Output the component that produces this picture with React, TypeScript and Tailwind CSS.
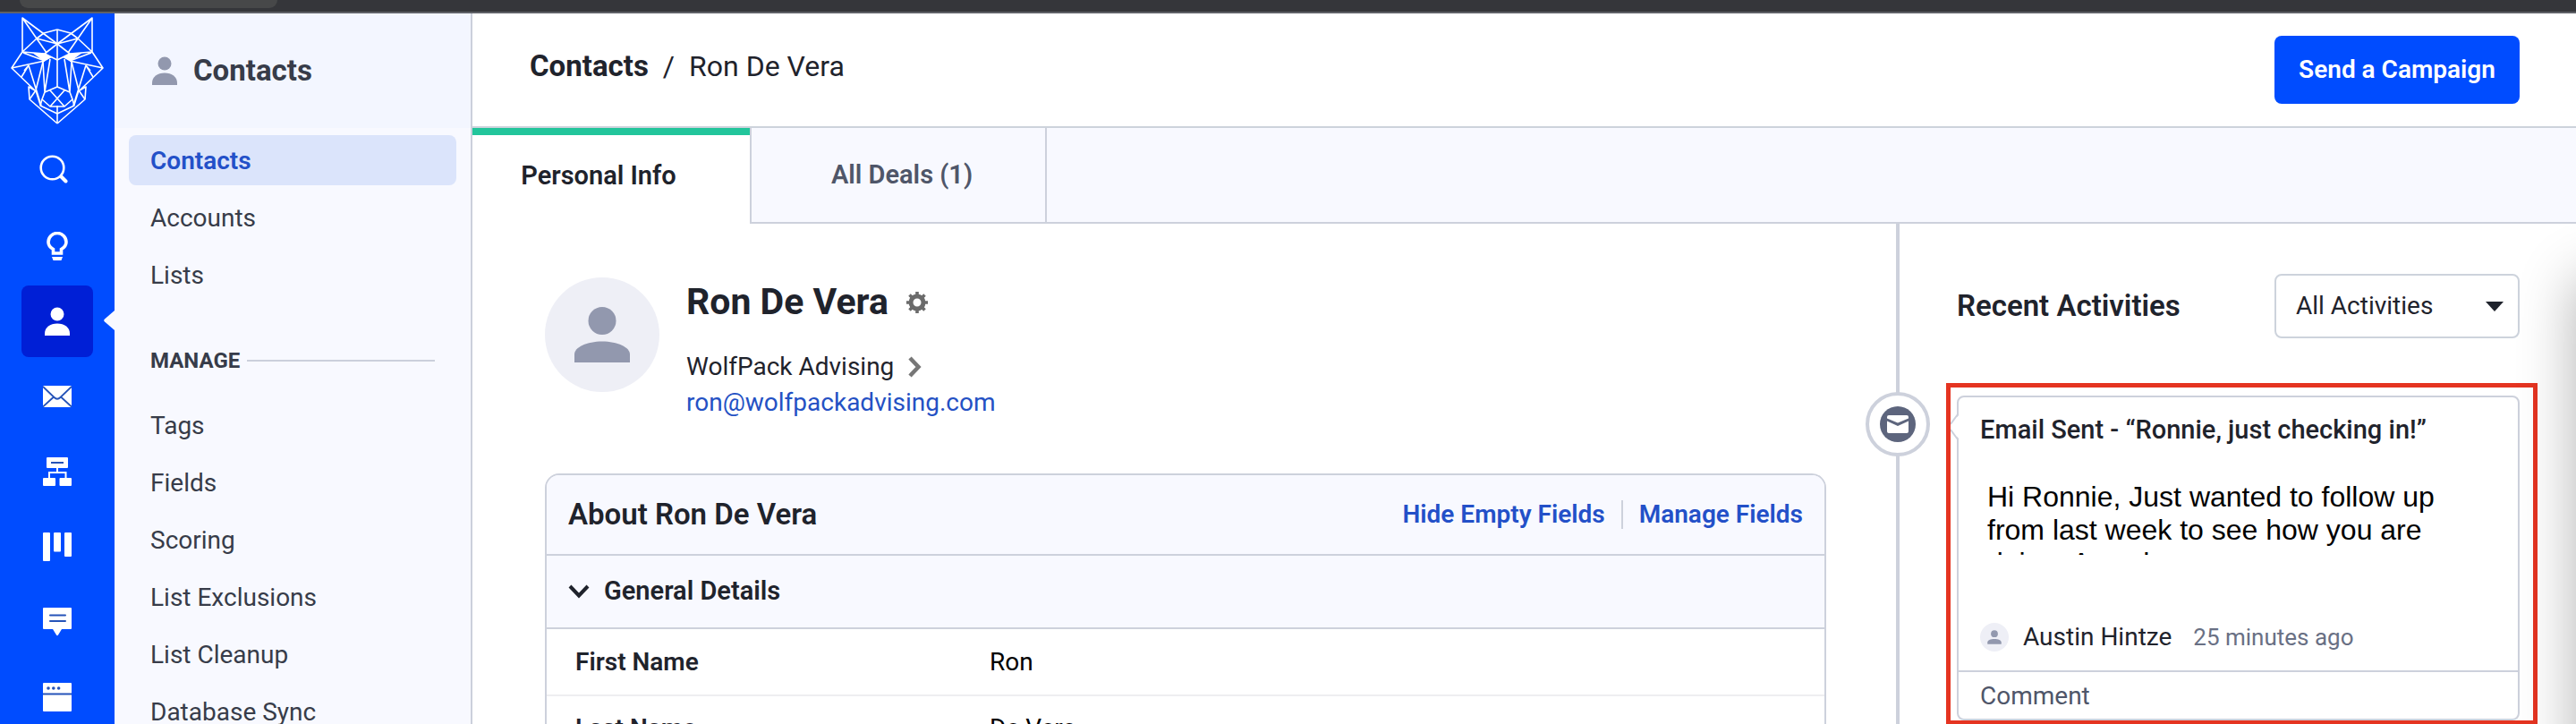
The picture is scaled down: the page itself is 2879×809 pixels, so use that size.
import React from 'react';

interface NavLink {
  label: string;
  active?: boolean;
}

interface ContactField {
  label: string;
  value: string;
}

const primaryLinks: NavLink[] = [
  { label: 'Contacts', active: true },
  { label: 'Accounts' },
  { label: 'Lists' },
];

const manageLinks: NavLink[] = [
  { label: 'Tags' },
  { label: 'Fields' },
  { label: 'Scoring' },
  { label: 'List Exclusions' },
  { label: 'List Cleanup' },
  { label: 'Database Sync' },
];

const contactFields: ContactField[] = [
  { label: 'First Name', value: 'Ron' },
  { label: 'Last Name', value: 'De Vera' },
];

// One half of the wolf head, mirrored around x = 64
const WolfHalf: React.FC = () => (
  <g>
    <path d="M25 58V20L64 49M25 20l27 39M25 58l16-15 8-6 15-4M41 43l23 6M64 49L50 60" />
    <path d="M25 58l25 2 14 7M25 58L13 76l37-8M13 76l26 25-7-4 1 14 31 27M26 59l24 9" />
    <path d="M32 73l-8 13M32 73l14 45M32 73l-5 6M40 101l-7 10M40 101L48 69M40 101l5 16" />
    <path d="M48 69l2 34M56 66l-6 37M50 103l14-6M50 103l-3 8 9 8h8M64 110l-8-9M64 110l-8 9" />
    <path d="M47 111l-2 7 19 9" />
    <path d="M36 59l14 1 8 4-9 5-6-5z" fill="currentColor" stroke="none" />
  </g>
);

const WolfLogo: React.FC = () => (
  <svg viewBox="0 15 128 136" className="h-[136px] w-32 shrink-0 text-white" fill="none" stroke="currentColor" strokeWidth="1.6" strokeLinejoin="round">
    <WolfHalf />
    <g transform="translate(128 0) scale(-1 1)">
      <WolfHalf />
    </g>
    <path d="M64 33v64M64 118v20" />
  </svg>
);

const PersonIcon: React.FC<{ className?: string }> = ({ className }) => (
  <svg viewBox="0 0 28 32" className={className} fill="currentColor">
    <circle cx="14" cy="8" r="7.5" />
    <path d="M0 32v-2.500C0 23 6 18.500 14 18.500S28 23 28 29.500V32z" />
  </svg>
);

const AvatarIcon: React.FC<{ className?: string }> = ({ className }) => (
  <svg viewBox="0 0 128 128" className={className}>
    <circle cx="64" cy="64" r="64" fill="#eeeff6" />
    <g fill="#9298ae">
      <circle cx="64" cy="48.500" r="15.500" />
      <path d="M33 95V86C33 78 47 71.500 64 71.500S95 78 95 86v9z" />
    </g>
  </svg>
);

const SearchIcon: React.FC = () => (
  <svg viewBox="0 0 32 32" className="mr-2 mb-1 h-8 w-8" fill="none" stroke="currentColor" strokeLinecap="round">
    <circle cx="14.500" cy="14.500" r="12.800" strokeWidth="2.600" />
    <path d="M24.500 24.500l5 5" strokeWidth="4" />
  </svg>
);

const BulbIcon: React.FC = () => (
  <svg viewBox="0 0 24 32" className="h-8 w-6" fill="none" stroke="currentColor" strokeWidth="3.600">
    <path d="M7.500 24v-4.500C4 17.500 2 15 2 11.500a10 10 0 0 1 20 0c0 3.500-2 6-5.500 8V24z" />
    <path d="M6 28h12l-1.500 4h-9z" fill="currentColor" stroke="none" />
  </svg>
);

const MailIcon: React.FC = () => (
  <svg viewBox="0 0 32 24" className="h-6 w-8">
    <rect width="32" height="24" rx="1" fill="currentColor" />
    <path d="M0 1l12.500 12c2.500 2.400 4.500 2.400 7 0L32 1M0 23.500l11.500-10.500M32 23.500L20.500 13" fill="none" stroke="#2553b8" strokeWidth="1.800" />
  </svg>
);

const AutomationIcon: React.FC = () => (
  <svg viewBox="0 0 32 32" className="h-8 w-8">
    <rect x="4" width="24" height="12" rx="1" fill="currentColor" />
    <rect y="23" width="14" height="9" rx="1" fill="currentColor" />
    <rect x="18.500" y="23" width="13.500" height="9" rx="1" fill="currentColor" />
    <path d="M16 12v5M7 24v-7h18.500v7" fill="none" stroke="currentColor" strokeWidth="2" />
    <path d="M9 6h14" stroke="#2553b8" strokeWidth="2" />
  </svg>
);

const PipelineIcon: React.FC = () => (
  <svg viewBox="0 0 32 32" className="h-8 w-8" fill="currentColor">
    <rect width="8" height="32" rx="1" />
    <rect x="12" width="8" height="21.500" rx="1" />
    <rect x="24" width="8" height="27" rx="1" />
  </svg>
);

const ChatIcon: React.FC = () => (
  <svg viewBox="0 0 32 32" className="h-8 w-8">
    <path d="M1 0h30a1 1 0 0 1 1 1v22a1 1 0 0 1-1 1H21l-4 6.500a1.200 1.200 0 0 1-2 0L11 24H1a1 1 0 0 1-1-1V1a1 1 0 0 1 1-1z" fill="currentColor" />
    <path d="M8 8.500h17M8 15h17" stroke="#2553b8" strokeWidth="2" strokeLinecap="round" />
  </svg>
);

const WindowIcon: React.FC = () => (
  <svg viewBox="0 0 32 32" className="h-8 w-8">
    <rect width="32" height="32" rx="1" fill="currentColor" />
    <path d="M0 12.500h32" stroke="#2553b8" strokeWidth="2" />
    <g fill="#2553b8">
      <circle cx="6" cy="6" r="1.800" />
      <circle cx="11.800" cy="6" r="1.800" />
      <circle cx="17.600" cy="6" r="1.800" />
    </g>
  </svg>
);

const GearIcon: React.FC = () => (
  <svg viewBox="0 0 24 24" className="h-6 w-6 text-[#6b6b6b]" fill="none" stroke="currentColor">
    <circle cx="12" cy="12" r="7" strokeWidth="5" />
    <path d="M12 0v5M12 19v5M0 12h5M19 12h5M3.500 3.500l4 4M16.500 16.500l4 4M20.500 3.500l-4 4M7.500 16.500l-4 4" strokeWidth="3.600" />
  </svg>
);

const MessageBadge: React.FC = () => (
  <span className="flex h-[72px] w-[72px] items-center justify-center rounded-full border-4 border-[#cdd1dc] bg-white">
    <svg viewBox="0 0 40 40" className="h-10 w-10">
      <circle cx="20" cy="20" r="20" fill="#5d657d" />
      <path d="M10 10h20a2 2 0 0 1 2 2v1.500L20 18.500 8 13.500V12a2 2 0 0 1 2-2z" fill="#fff" />
      <path d="M8 16.500l12 5.500 12-5.500V28a2 2 0 0 1-2 2H10a2 2 0 0 1-2-2z" fill="#fff" />
    </svg>
  </span>
);

const railItems = [
  { name: 'Search', icon: <SearchIcon /> },
  { name: 'Ideas', icon: <BulbIcon /> },
  { name: 'Contacts', icon: <PersonIcon className="h-8 w-7" />, active: true },
  { name: 'Campaigns', icon: <MailIcon /> },
  { name: 'Automations', icon: <AutomationIcon /> },
  { name: 'Deals', icon: <PipelineIcon /> },
  { name: 'Conversations', icon: <ChatIcon /> },
  { name: 'Site', icon: <WindowIcon /> },
];

const IconRail: React.FC = () => (
  <nav className="flex w-32 shrink-0 flex-col items-center overflow-hidden bg-[#004cff]">
    <WolfLogo />
    <div className="flex w-full flex-col items-center gap-1">
      {railItems.map((item) => (
        <div key={item.name} className="relative flex w-full shrink-0 justify-center">
          <button
            aria-label={item.name}
            className={`flex h-20 w-20 items-center justify-center rounded-lg text-white ${item.active ? 'bg-[#001fd6]' : ''}`}
          >
            {item.icon}
          </button>
          {item.active && (
            <svg viewBox="0 0 12 22" className="absolute top-7 right-0 h-[22px] w-3" fill="#f8f9ff">
              <path d="M12 0v22L1 12.500a2 2 0 0 1 0-3z" />
            </svg>
          )}
        </div>
      ))}
    </div>
  </nav>
);

const SideLink: React.FC<{ link: NavLink }> = ({ link }) => (
  <a
    href="#"
    className={`flex h-14 shrink-0 items-center rounded-lg pt-0.5 pl-6 text-[28px] ${
      link.active ? 'bg-[#dbe4fb] font-semibold text-[#2350c8]' : 'text-[#373c49]'
    }`}
  >
    {link.label}
  </a>
);

const Sidebar: React.FC = () => (
  <aside className="w-[400px] shrink-0 overflow-hidden border-r-2 border-[#cbd0dc] bg-[#f8f9ff]">
    <div className="flex h-32 items-center gap-[18px] bg-[#f3f6ff] pl-[42px]">
      <PersonIcon className="h-8 w-7 text-[#9298ae]" />
      <h2 className="text-[33px] font-bold text-[#373c49]">Contacts</h2>
    </div>
    <div className="flex flex-col gap-2 px-4 pt-2">
      {primaryLinks.map((link) => (
        <SideLink key={link.label} link={link} />
      ))}
    </div>
    <div className="mt-10 mb-4 flex h-14 items-center gap-2 pr-10 pl-10">
      <h3 className="text-2xl font-bold text-[#373c49]">MANAGE</h3>
      <div className="h-0.5 flex-1 bg-[#cbd0dc]" />
    </div>
    <div className="flex flex-col gap-2 px-4">
      {manageLinks.map((link) => (
        <SideLink key={link.label} link={link} />
      ))}
    </div>
  </aside>
);

const PageHeader: React.FC = () => (
  <header className="flex h-32 shrink-0 items-center justify-between border-b-2 border-[#cdd3dc] pr-[63px] pl-16">
    <div className="flex items-baseline gap-4 pb-2 text-[32px] text-[#1f232c]">
      <a href="#" className="text-[33px] font-bold">Contacts</a>
      <span>/</span>
      <span>Ron De Vera</span>
    </div>
    <button className="h-[76px] w-[274px] rounded-lg bg-[#004cff] text-[28px] font-semibold text-white">Send a Campaign</button>
  </header>
);

const Tabs: React.FC = () => (
  <div className="flex h-[107px] shrink-0 bg-[#f8f9ff] text-[29px] font-semibold">
    <button className="w-[310px] border-t-8 border-[#22c59b] bg-white pr-7 pb-2 text-[#1f232c]">Personal Info</button>
    <button className="w-[332px] border-x-2 border-b-2 border-[#cdd1dc] pl-2 text-[#4f5669]">All Deals (1)</button>
    <div className="flex-1 border-b-2 border-[#cdd1dc]" />
  </div>
);

const ContactSummary: React.FC = () => (
  <section className="flex gap-[30px]">
    <AvatarIcon className="h-32 w-32 shrink-0" />
    <div className="pt-1 text-[28px] text-[#1f232c]">
      <div className="flex h-12 items-center gap-5">
        <h1 className="text-[41px] font-bold">Ron De Vera</h1>
        <button aria-label="Contact settings">
          <GearIcon />
        </button>
      </div>
      <div className="mt-7 flex h-10 items-center gap-4">
        <span>WolfPack Advising</span>
        <svg viewBox="0 0 15 24" className="h-6 w-[15px]" fill="none" stroke="#777" strokeWidth="4.500">
          <path d="M2 2l9.500 10L2 22" />
        </svg>
      </div>
      <a href="mailto:ron@wolfpackadvising.com" className="flex h-10 items-center text-[#2451c4]">ron@wolfpackadvising.com</a>
    </div>
  </section>
);

const AboutCard: React.FC = () => (
  <section className="mt-[59px] overflow-hidden rounded-2xl border-2 border-[#cdd1dc]">
    <div className="flex h-[90px] items-center justify-between border-b-2 border-[#cdd1dc] bg-[#f8f9ff] px-6">
      <h2 className="text-[33px] font-semibold text-[#1f232c]">About Ron De Vera</h2>
      <div className="flex items-center text-[28px] font-semibold text-[#2350c8]">
        <button className="border-r-2 border-[#cdd1dc] pr-[18px] leading-8">Hide Empty Fields</button>
        <button className="pl-[18px] leading-8">Manage Fields</button>
      </div>
    </div>
    <button className="flex h-[82px] w-full items-center gap-4 border-b-2 border-[#cdd1dc] bg-[#f8f9ff] px-6 text-[29px] font-semibold text-[#1f232c]">
      <svg viewBox="0 0 24 16" className="h-4 w-6" fill="none" stroke="currentColor" strokeWidth="4">
        <path d="M2 2l10 10.500L22 2" />
      </svg>
      General Details
    </button>
    <table className="w-full text-left text-[28px]">
      <tbody>
        {contactFields.map((field) => (
          <tr key={field.label} className="h-[74px] border-b-2 border-[#eeeef1]">
            <th scope="row" className="w-[495px] pl-8 font-semibold text-[#1f232c]">{field.label}</th>
            <td className="text-black">{field.value}</td>
          </tr>
        ))}
      </tbody>
    </table>
  </section>
);

const ActivityCard: React.FC = () => (
  <article className="relative rounded-lg border-2 border-[#cdd1dc] bg-white">
    <svg viewBox="0 0 10 30" className="absolute top-[18px] -left-[9px] h-[30px] w-2.5">
      <path d="M10 1L0 12v6l10 11z" fill="#fff" />
      <path d="M8 1L0 12M0 18l8 11" fill="none" stroke="#cdd1dc" strokeWidth="2" />
    </svg>
    <div className="px-6 pt-4 pb-[17px]">
      <h3 className="text-[29px] leading-10 font-medium text-[#1f232c]">Email Sent - “Ronnie, just checking in!”</h3>
      <p className="mt-[37px] h-[83px] overflow-hidden pr-16 pl-2 font-['Liberation_Sans',sans-serif] text-[32px] leading-[37px] text-black">
        Hi Ronnie, Just wanted to follow up from last week to see how you are doing. Any chance
      </p>
      <div className="mt-[72px] flex h-10 items-center text-[28px] text-[#1f232c]">
        <AvatarIcon className="mr-4 h-8 w-8" />
        <span>Austin Hintze</span>
        <time className="ml-6 text-[26px] text-[#697084]">25 minutes ago</time>
      </div>
    </div>
    <button className="flex h-[54px] w-full items-center border-t-2 border-[#cdd1dc] px-6 pt-0.5 text-[28px] text-[#4f5669]">Comment</button>
  </article>
);

const ActivityColumn: React.FC = () => (
  <aside className="w-[760px] shrink-0 border-l-4 border-[#cdd1dc] pt-14">
    <div className="flex items-center justify-between pr-[63px] pl-16">
      <h2 className="text-[33px] font-semibold text-[#1f232c]">Recent Activities</h2>
      <div className="relative w-[274px]">
        <select
          aria-label="Filter activities"
          className="h-[72px] w-full appearance-none rounded-lg border-2 border-[#cdd3dc] bg-white pl-[22px] text-[28px] text-[#1f232c]"
        >
          <option>All Activities</option>
        </select>
        <svg viewBox="0 0 20 11" className="pointer-events-none absolute top-[31px] right-[18px] h-[11px] w-5" fill="#1f232c">
          <path d="M0 0h20L10 11z" />
        </svg>
      </div>
    </div>
    <div className="relative mt-[50px] mr-[43px] ml-[52px] border-[5px] border-[#e53421] pt-[9px] pr-[15px] pl-[7px]">
      <div className="absolute top-[5px] -left-[95px]">
        <MessageBadge />
      </div>
      <ActivityCard />
    </div>
  </aside>
);

const App: React.FC = () => {
  return (
    <div className="flex h-screen flex-col overflow-hidden bg-white font-[Roboto,sans-serif]">
      <div className="h-[15px] shrink-0 border-b-2 border-[#5f6167] bg-[#35363a] pl-[22px]">
        <div className="h-[9px] w-72 rounded-b-[20px] bg-[#474849]" />
      </div>
      <div className="flex min-h-0 flex-1">
        <IconRail />
        <Sidebar />
        <main className="relative flex min-w-0 flex-1 flex-col overflow-hidden">
          <PageHeader />
          <Tabs />
          <div className="flex min-h-0 flex-1">
            <div className="min-w-0 flex-1 pt-[60px] pr-[78px] pl-[81px]">
              <ContactSummary />
              <AboutCard />
            </div>
            <ActivityColumn />
          </div>
          {/* Shadow of the panel parked past the right edge */}
          <div className="pointer-events-none absolute top-[296px] -right-40 -bottom-40 w-40 shadow-[0_0_64px_rgba(0,0,0,0.3)]" />
        </main>
      </div>
    </div>
  );
};

export default App;
